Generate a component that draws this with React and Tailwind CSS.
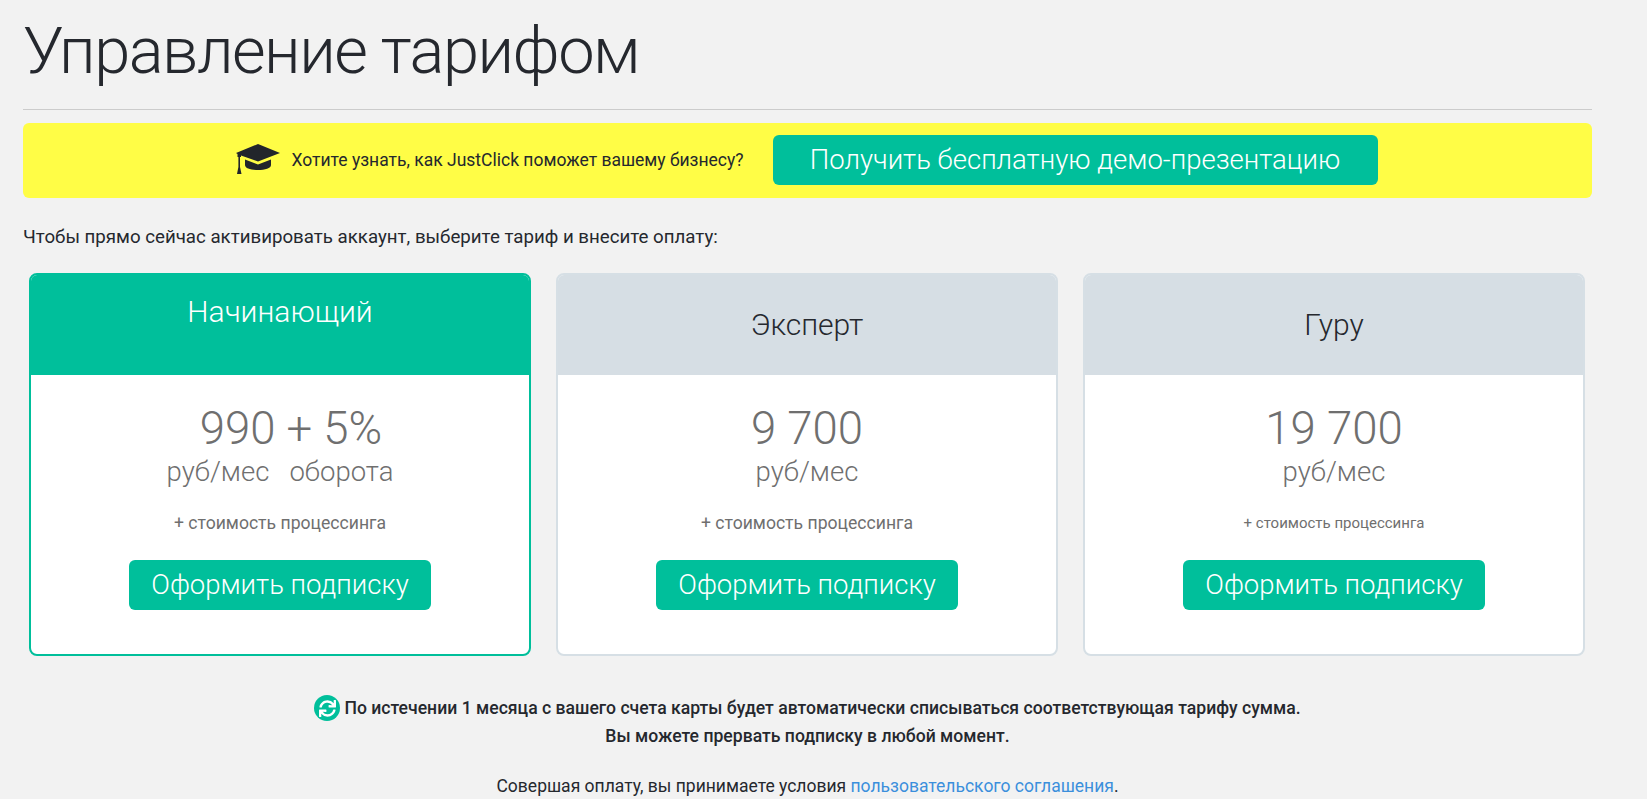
import React from 'react';
import { FaSync } from 'react-icons/fa';

const plans = [
  { name: 'Начинающий', active: true, price: '990 + 5%', unit: 'руб/мес\u00a0\u00a0\u00a0оборота', note: '+ стоимость процессинга' },
  { name: 'Эксперт', price: '9 700', unit: 'руб/мес', note: '+ стоимость процессинга' },
  { name: 'Гуру', price: '19 700', unit: 'руб/мес', note: '+ стоимость процессинга', small: true },
];

const Cap = () => (
  <svg viewBox="0 0 46 32" className="w-[46px] h-[32px] mb-[2px] shrink-0" fill="#22252b">
    <path d="M23 1 L45 10 L23 18.5 L6 12.5 L6 14 L2.5 14 L2.5 11 L1 10 Z" />
    <path d="M10 16.5 L23 21.5 L36 16.5 L36 22 C36 25.5 30 27 23 27 C16 27 10 25.5 10 22 Z" />
    <path d="M3.4 12 L5 12 L5 24 L6.5 31 L2 31 L3.4 24 Z" />
  </svg>
);

const PlanCard = ({ plan }) => (
  <div className={`rounded-[8px] border-2 overflow-hidden bg-white h-[383px] ${plan.active ? 'border-[#00bf9b]' : 'border-[#d6dfe5]'}`}>
    <div className={`h-[100px] text-center text-[30px] font-light ${plan.active ? 'bg-[#00bf9b] text-white pt-[14px]' : 'bg-[#d6dee4] text-[#25282e] pt-[27px]'}`}>
      {plan.name}
    </div>
    <div className="flex flex-col items-center text-[#6f6f6f]">
      <div className={`mt-[28px] text-[45.5px] leading-[52px] font-light ${plan.active ? 'pl-[22px]' : ''}`}>{plan.price}</div>
      <div className="text-[27.5px] leading-[34px] font-light">{plan.unit}</div>
      <div className={`mt-[22px] ${plan.small ? 'text-[15px]' : 'text-[17.6px]'} leading-[24px]`}>{plan.note}</div>
      <button className="mt-[25px] w-[302px] h-[50px] rounded-[6px] bg-[#00bf9b] text-white text-[27.5px] font-light">
        Оформить подписку
      </button>
    </div>
  </div>
);

export default function App() {
  return (
    <div className="min-h-[799px] overflow-hidden bg-[#f2f2f2] text-[#25282e] font-['Roboto',sans-serif]">
      <div className="ml-[23px] w-[1569px]">
        <h1 className="pt-[8px] text-[65px] leading-[86px] font-light tracking-[-1.5px]">Управление тарифом</h1>
        <div className="mt-[15px] border-t border-[#cccccc]" />
        <div className="mt-[13px] h-[75px] pb-[1px] pr-[2px] rounded-[6px] bg-[#fffd46] flex items-center justify-center">
          <Cap />
          <span className="ml-[10px] text-[17.5px]">Хотите узнать, как JustClick поможет вашему бизнесу?</span>
          <button className="ml-[29px] w-[605px] h-[50px] rounded-[6px] bg-[#00bf9b] text-white text-[27.5px] font-light">
            Получить бесплатную демо-презентацию
          </button>
        </div>
        <p className="mt-[27px] text-[18.7px] leading-[24px]">Чтобы прямо сейчас активировать аккаунт, выберите тариф и внесите оплату:</p>
        <div className="mt-[24px] pl-[6px] pr-[7px] grid grid-cols-3 gap-[25px]">
          {plans.map(plan => <PlanCard key={plan.name} plan={plan} />)}
        </div>
        <div className="mt-[38px] text-center text-[17.6px] font-medium leading-[28px]">
          <div className="flex items-center justify-center">
            <span className="mr-[4px] w-[26px] h-[26px] rounded-full bg-[#00bf9b] flex items-center justify-center text-white">
              <FaSync size={17} />
            </span>
            По истечении 1 месяца с вашего счета карты будет автоматически списываться соответствующая тарифу сумма.
          </div>
          <div>Вы можете прервать подписку в любой момент.</div>
        </div>
        <p className="mt-[24px] text-center text-[17.5px] leading-[24px]">
          Совершая оплату, вы принимаете условия <a className="text-[#3b8fdc]">пользовательского соглашения</a>.
        </p>
      </div>
    </div>
  );
}
